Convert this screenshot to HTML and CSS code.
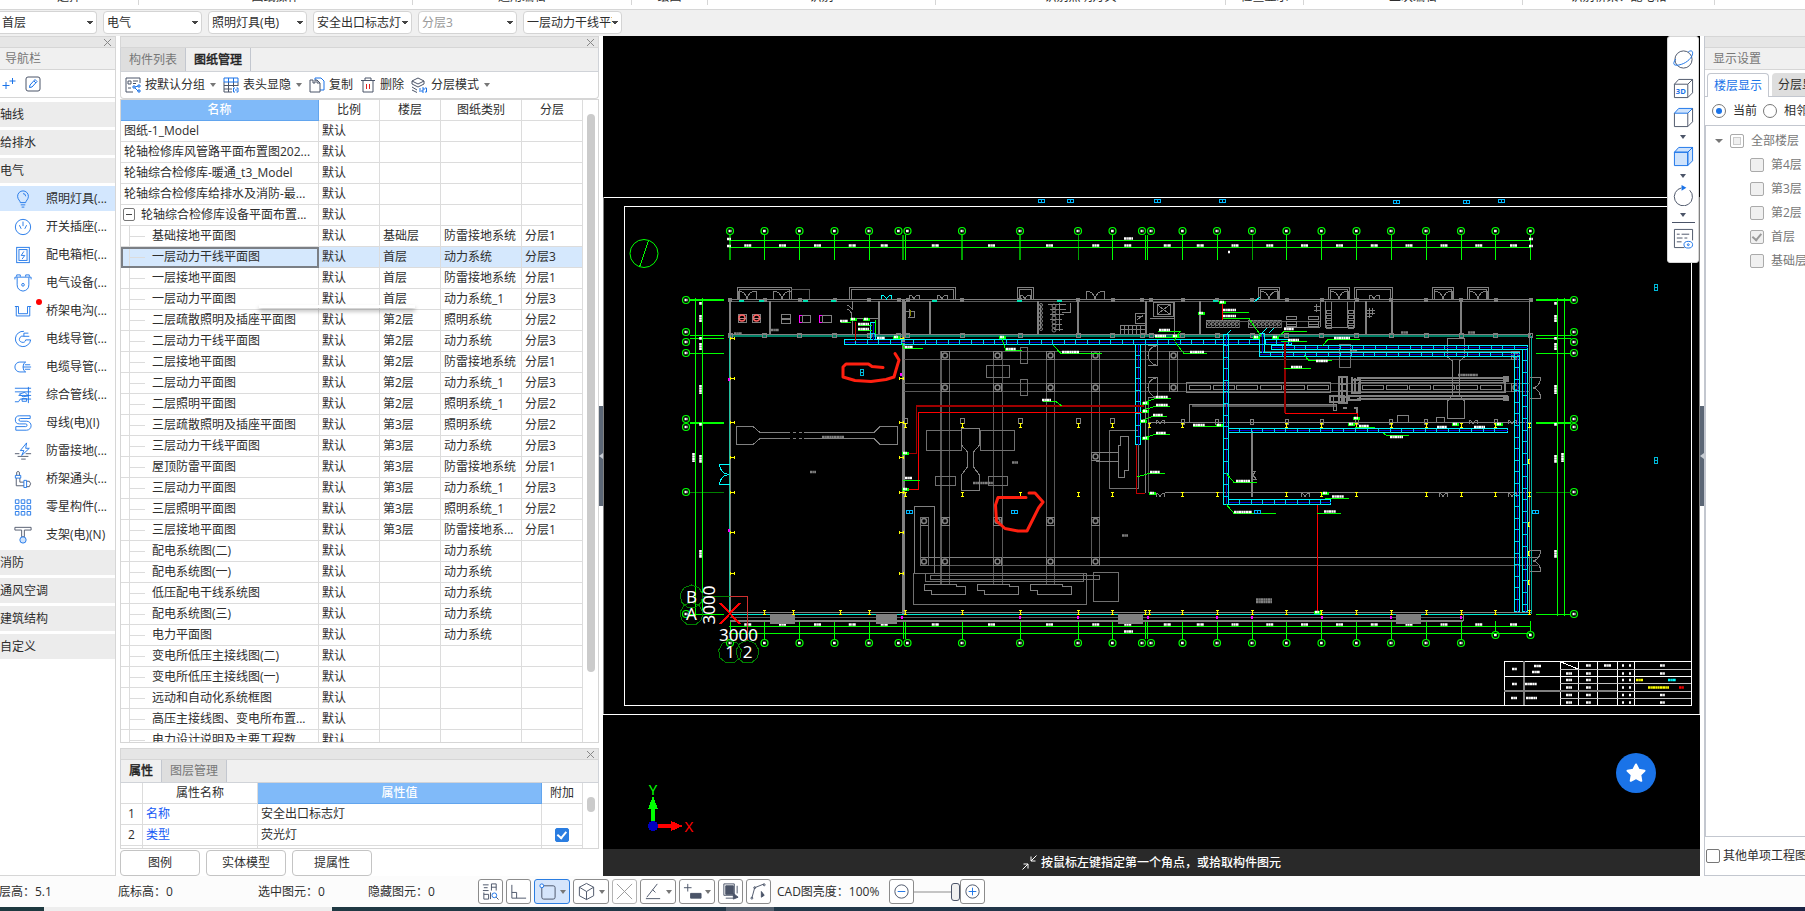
FILE: index.html
```
<!DOCTYPE html>
<html lang="zh-CN">
<head>
  <meta charset="UTF-8" />
  <meta name="viewport" content="width=device-width, initial-scale=1.0" />
  <title>图纸管理</title>
  <link rel="stylesheet" href="styles.css">
</head>
<body>
  <header class="ribbon">
    <span class="w1">选择</span><span class="w2">图纸操作</span><span class="w3">通用编辑</span><span class="w4">绘图</span><span class="w5">识别</span><span class="w6">识别照明灯具</span><span class="w7">检查显示</span><span class="w8">二次编辑</span><span class="w9">识别桥架、配电箱</span>
  </header>

  <div class="combos">
    <select aria-label="楼层"><option>首层</option></select>
    <select aria-label="专业"><option>电气</option></select>
    <select aria-label="构件类型"><option>照明灯具(电)</option></select>
    <select aria-label="构件"><option>安全出口标志灯</option></select>
    <select aria-label="分层" class="muted"><option>分层3</option></select>
    <select aria-label="图纸"><option>一层动力干线平面图</option></select>
  </div>

  <main>
    <nav class="nav">
      <div class="strip"><button class="close" aria-label="关闭"></button></div>
      <div class="panel-title">导航栏</div>
      <div class="nav-tools">
        <button aria-label="新增"><svg width="16" height="16" viewBox="0 0 16 16" class="blue"><path d="M5 6v7M1.500 9.500h7M11.500 2v6M8.500 5h6"/></svg></button>
        <button aria-label="编辑"><svg width="16" height="16" viewBox="0 0 16 16" class="dark"><rect x="1" y="1" width="14" height="14" rx="2"/><path class="b" d="M4.500 11.500l.5-2.500 5-5.500 2 2-5 5.500zM9 5l2 2"/></svg></button>
      </div>
      <a class="group" href="#">轴线</a>
      <a class="group" href="#">给排水</a>
      <a class="group" href="#">电气</a>
      <a class="item active" href="#"><svg viewBox="0 0 20 20"><path d="M7 14c0-2-3-3.500-3-7a6 6 0 0 1 12 0c0 3.500-3 5-3 7zM7.500 16.500h5M8.500 19h3M10 4a3 3 0 0 1 3 3"/></svg>照明灯具(...</a>
      <a class="item" href="#"><svg viewBox="0 0 20 20"><circle cx="10" cy="10" r="8.500"/><path d="M10 4v5M6 8l2 4M14 8l-2 4"/></svg>开关插座(...</a>
      <a class="item" href="#"><svg viewBox="0 0 20 20"><rect x="3" y="1.500" width="14" height="17"/><rect x="5.500" y="4" width="9" height="12"/><path d="M11 6l-3 4.500h4L9 14.500"/></svg>配电箱柜(...</a>
      <a class="item" href="#"><svg viewBox="0 0 20 20"><path d="M1 6V3.500h18V6M3 3V1h4v2M13 3V1h4v2M3.500 4v8q0 6 6.500 7 6.500-1 6.500-7V4"/><circle cx="10" cy="12" r="1.500"/></svg>电气设备(...</a>
      <a class="item dot" href="#"><svg viewBox="0 0 20 20"><path d="M1 5h4v8h10V5h4M2.500 5v10.500h15V5"/></svg>桥架电沟(...</a>
      <a class="item" href="#"><svg viewBox="0 0 20 20"><path d="M11 1.500A8.500 8.500 0 1 0 18.500 11H13a3.500 3.500 0 1 1-2-4V3.500h5M11 7h6"/></svg>电线导管(...</a>
      <a class="item" href="#"><svg viewBox="0 0 20 20"><path d="M13 4.500H6.500a5.500 5.500 0 0 0 0 11H13M13 4.500q-3 1-3 5.500t3 5.500M12 7.500h6M10 10h9M12 12.500h6"/></svg>电缆导管(...</a>
      <a class="item" href="#"><svg viewBox="0 0 20 20"><path d="M1 2.500h18M1 6.500h18M5 10.500h14M1 17.500h4l2-3h12M16 1v18M6 9l6-2 4 4-6 1zM9 14h5v3H9z"/></svg>综合管线(...</a>
      <a class="item" href="#"><svg viewBox="0 0 20 20"><path d="M18 2H6a4.500 4.500 0 0 0 0 9h7a1.500 1.500 0 0 1 0 3H2v4h12a4.500 4.500 0 0 0 0-10H7a1.500 1.500 0 0 1 0-3h11z"/></svg>母线(电)(I)</a>
      <a class="item" href="#"><svg viewBox="0 0 20 20"><path d="M14 1L7 9.500h4L8.500 15 17 7h-4z"/><path class="g" d="M1 13h5M13 13h6M4 16h12M8 19h5"/></svg>防雷接地(...</a>
      <a class="item" href="#"><svg viewBox="0 0 20 20"><path class="g" d="M3 6V2.500q1.500-2 3 0V6M2.500 9v8.500H11M6.500 9v4.500H11M14 12.500h3q3 2.500 0 6h-3"/><path d="M1.500 6h6v3h-6zM11 11.500h3v8h-3z"/></svg>桥架通头(...</a>
      <a class="item" href="#"><svg viewBox="0 0 20 20"><path d="M1.500 2h4v4h-4zM8 2h4v4H8zM14.500 2h4v4h-4zM1.500 8.500h4v4h-4zM8 8.500h4v4H8zM14.500 8.500h4v4h-4zM1.500 15h4v4h-4zM8 15h4v4H8zM14.500 15h4v4h-4z"/></svg>零星构件(...</a>
      <a class="item" href="#"><svg viewBox="0 0 20 20"><path class="g" d="M1 1.500h18v3h-7.500V12h-3V4.500H1z"/><circle cx="10" cy="15.500" r="3.500" fill="#cfe3fc"/></svg>支架(电)(N)</a>
      <a class="group" href="#">消防</a>
      <a class="group" href="#">通风空调</a>
      <a class="group" href="#">建筑结构</a>
      <a class="group" href="#">自定义</a>
    </nav>

    <div class="middle">
      <section class="drawings">
        <div class="strip"><button class="close" aria-label="关闭"></button></div>
        <div class="tabs"><button>构件列表</button><button class="on">图纸管理</button></div>
        <div class="tools">
          <button class="drop"><svg viewBox="0 0 16 16"><path class="g" d="M8 15H1V1h14v5M3 4h3v3H3zM8 4h5M8 6.500h3M3 11h3"/><path d="M8 9h2v2H8zM13 8h2v2h-2zM13 13h2v2h-2zM10 10l3-1M10 11l3 3"/></svg>按默认分组</button>
          <button class="drop"><svg viewBox="0 0 16 16"><path class="g" d="M9 15H1V5M1 8.500h14M1 12h8M5.500 5v10M10.500 5v5M15 5v4"/><path d="M1 1h14v4H1zM5.500 1v4M10.500 1v4M12 11h-1.500v4H12M13.500 11H15v4h-1.500M12 13h2"/></svg>表头显隐</button>
          <button><svg viewBox="0 0 16 16"><path d="M6 3V1h6l3 3v9h-4"/><path class="g" d="M4 3H1v12h10v-9l-3-3H6v3H4zM8 3v3h3"/></svg>复制</button>
          <button><svg viewBox="0 0 16 16"><path class="g" d="M1 3.500h14M5 3V1h6v2M3 4v11h10V4"/><path d="M6.500 7v5M9.500 7v5" class="red"/></svg>删除</button>
          <button class="drop"><svg viewBox="0 0 16 16"><path class="g" d="M7 1l6 3-6 3-6-3zM1 7l6 3 6-3M1 10l5 3M1 13l5 2.500M1 4v3M13 4v3"/><path d="M9 11v4M11 11h2v2h-2v2h2M14 11h1.500v4H14"/></svg>分层模式</button>
        </div>
        <div class="sheet">
          <div class="tablebox">
            <table class="list">
              <thead><tr><th class="hl c1">名称</th><th class="c2">比例</th><th class="c2">楼层</th><th class="c3">图纸类别</th><th class="c4">分层</th></tr></thead>
              <tbody id="rows"></tbody>
            </table>
          </div>
          <div class="scroll"><i></i></div>
          <div class="popup-edge"></div>
        </div>
      </section>

      <section class="props">
        <div class="strip"><button class="close" aria-label="关闭"></button></div>
        <div class="tabs"><button class="on">属性</button><button>图层管理</button></div>
        <div class="sheet">
          <div class="tablebox">
            <table class="list prop">
              <thead><tr><th class="p0"></th><th class="p1">属性名称</th><th class="hl">属性值</th><th class="p3">附加</th></tr></thead>
              <tbody>
                <tr><td class="num">1</td><td class="key">名称</td><td>安全出口标志灯</td><td></td></tr>
                <tr><td class="num">2</td><td class="key">类型</td><td>荧光灯</td><td class="tick"><input type="checkbox" aria-label="附加" checked></td></tr>
                <tr><td></td><td></td><td></td><td></td></tr>
              </tbody>
            </table>
          </div>
          <div class="scroll small"><i></i></div>
        </div>
      </section>
      <div class="actions"><button>图例</button><button>实体模型</button><button>提属性</button></div>
    </div>

    <div class="splitter"><button aria-label="收起左侧"></button></div>

    <div class="canvas">
      <svg id="cad" viewBox="603 36 1097 813" role="img" aria-label="一层动力干线平面图"></svg>
      <div class="prompt">
        <svg width="15" height="15" viewBox="0 0 15 15"><path d="M14.500.500L9 6M9 1.500V6h4.500M.500 14.500L6 9M1.500 9H6v4.500"/></svg>
        按鼠标左键指定第一个角点，或拾取构件图元
      </div>
      <div class="palette">
        <button aria-label="动态观察"><svg viewBox="0 0 22 22"><circle cx="11" cy="11" r="9"/><path class="b" d="M16 3c3-2 5-1 4.500 2C20 9 15 14 9 16c-6 2-9 1-8-2 .5-1.500 1-2.500 2-3.500"/></svg></button>
        <button aria-label="三维"><svg viewBox="0 0 22 22"><path d="M1.500 6.500h14v14h-14zM1.500 6.500L6 1.500h14.500l-5 5M20.500 1.500v14l-5 5"/><text x="3" y="17">3D</text></svg></button>
        <button aria-label="俯视" class="more"><svg viewBox="0 0 22 22"><path class="b" d="M1.500 6.500L6 1.500h14.500l-5 5z" fill="#cfe3fc"/><path d="M1.500 6.500v14h14v-14M20.500 1.500v14l-5 5"/></svg></button>
        <button aria-label="实体" class="more"><svg viewBox="0 0 22 22"><path class="b" fill="#cfe3fc" d="M1.500 6.500h14v14h-14zM1.500 6.500L6 1.500h14.500l-5 5zM20.500 1.500v14l-5 5v-14z"/></svg></button>
        <button aria-label="旋转" class="more"><svg viewBox="0 0 22 22"><path d="M17.500 5.500A9.500 9.500 0 1 1 9 3"/><path d="M9 0l5 3-5 3z" fill="#1a73e8" stroke="none"/></svg></button>
        <hr>
        <button aria-label="显示列表"><svg viewBox="0 0 22 22"><path d="M12 20.500H1.500v-19h19V13M4 6.500h3M9 6.500h8M4 10.500h6M12 10.500h3M4 14.500h5"/><ellipse class="b" cx="16" cy="17.500" rx="4.500" ry="3.500"/><circle class="b" cx="16" cy="17.500" r="1"/></svg></button>
      </div>
      <button class="fab" aria-label="收藏"><svg width="22" height="22" viewBox="0 0 22 22"><path d="M11 2.500l2.700 5.300 5.800.9-4.200 4.200 1 5.900L11 16l-5.300 2.800 1-5.900L2.500 8.700l5.800-.9z"/></svg></button>
    </div>

    <div class="splitter right"><button aria-label="收起右侧"></button></div>

    <aside class="display">
      <div class="strip"></div>
      <div class="panel-title">显示设置</div>
      <div class="dtabs"><button class="on">楼层显示</button><button>分层显示</button></div>
      <div class="radios">
        <label><input type="radio" name="scope" checked>当前</label>
        <label><input type="radio" name="scope">相邻</label>
      </div>
      <div class="tree">
        <label class="root"><input type="checkbox" class="part">全部楼层</label>
        <label><input type="checkbox">第4层</label>
        <label><input type="checkbox">第3层</label>
        <label><input type="checkbox">第2层</label>
        <label><input type="checkbox" checked>首层</label>
        <label><input type="checkbox">基础层</label>
      </div>
      <label class="other"><input type="checkbox">其他单项工程图元</label>
    </aside>
  </main>

  <footer class="status">
    <span class="s1">层高：5.1</span><span class="s2">底标高：0</span><span class="s3">选中图元：0</span><span class="s4">隐藏图元：0</span>
    <div class="modes">
      <button aria-label="图元查找"><svg viewBox="0 0 20 20"><path d="M2 3h6M3 6h4M2 9h6M11 9V2h5v7M11 5.500h5M3 11v7h5v-5H3M10 11v7"/><circle class="b" cx="14" cy="14" r="2.500"/><path d="M16 16l2.500 2.500"/></svg></button>
      <button aria-label="正交"><svg viewBox="0 0 20 20"><path d="M3 3v14h15M3 11h5v6"/></svg></button>
      <button class="drop on" aria-label="框选"><svg viewBox="0 0 20 20"><rect x="4" y="4" width="14" height="14" rx="2"/><circle class="b" cx="4" cy="4" r="2" fill="#fff"/></svg></button>
      <button class="drop" aria-label="视图"><svg viewBox="0 0 20 20"><path d="M10 1.500l7.500 4v9l-7.500 4-7.500-4v-9zM2.500 5.500L10 10l7.500-4.500M10 10v8.500"/></svg></button>
      <button class="pale" aria-label="交点"><svg viewBox="0 0 20 20"><path d="M2 2l16 16M18 2L2 18"/></svg></button>
      <button class="drop" aria-label="角度"><svg viewBox="0 0 20 20"><path d="M14 2L3 16M2 17.500h15M9 8l3 3"/></svg></button>
      <button class="drop" aria-label="偏移"><svg viewBox="0 0 20 20"><path d="M1 6h8M5 2v8"/><path d="M8 12h11v5H8z" fill="#4b5468"/></svg></button>
      <button aria-label="图层"><svg viewBox="0 0 20 20"><path d="M3 2h11v12H3zM17 4v8M5 17h8"/><path d="M5 4h8v9H5zM13 12v6l5-2z" fill="#4b5468"/></svg></button>
      <button aria-label="拾取"><svg viewBox="0 0 20 20"><path d="M3 17L6 6l10-4"/><circle cx="3" cy="17" r="1"/><circle cx="6" cy="6" r="1"/><circle cx="16" cy="3" r="1"/><path d="M13 10v6l3-2z" fill="#4b5468"/></svg></button>
      <label for="bright">CAD图亮度：100%</label>
      <button aria-label="减小"><svg viewBox="0 0 20 20"><circle cx="10" cy="10" r="7"/><path class="b" d="M6 10h8"/></svg></button>
      <input type="range" id="bright" min="0" max="100" value="100">
      <button aria-label="增大"><svg viewBox="0 0 20 20"><circle cx="10" cy="10" r="7"/><path class="b" d="M6 10h8M10 6v8"/></svg></button>
    </div>
  </footer>
  <div class="taskbar"></div>

  <script src="script.js"></script>
</body>
</html>
```
FILE: styles.css
```
* {
  box-sizing: border-box;
}

html {
  height: 100%;
  overflow: hidden;
}

body {
  margin: 0;
  height: 100%;
  display: flex;
  flex-direction: column;
  overflow: hidden;
  background: #fff;
  color: #2e2e2e;
  font: 12px/18px "Open Sans", "Noto Sans CJK SC", sans-serif;
  white-space: nowrap;
}

button, select, input {
  font: inherit;
  color: inherit;
  margin: 0;
}

button {
  border: 0;
  padding: 0;
  background: none;
}

svg {
  fill: none;
  stroke: #1a73e8;
  flex: none;
}

svg .g, svg.dark { stroke: #4b5468; }
svg .b { stroke: #1a73e8; }
svg .red { stroke: #e02020; }

/* ribbon bottoms */
.ribbon {
  display: flex;
  height: 10px;
  flex: none;
  overflow: hidden;
  border-bottom: 1px solid #d6d6d6;
}

.ribbon span {
  height: 5px;
  line-height: 12px;
  border-right: 1px solid #d6d6d6;
  display: flex;
  align-items: flex-end;
  justify-content: center;
  padding-bottom: 2px;
  flex: none;
}

.w1 { width: 139px; }
.w2 { width: 274px; }
.w3 { width: 219px; }
.w4 { width: 76px; }
.w5 { width: 228px; }
.w6 { width: 290px; }
.w7 { width: 78px; }
.w8 { width: 219px; }
.w9 { width: 192px; }

.combos {
  display: flex;
  gap: 6px;
  height: 26px;
  flex: none;
  padding: 1px 0 2px;
  background: #f0f0f0;
}

.combos select {
  appearance: none;
  width: 99px;
  height: 23px;
  border: 1px solid #d4d4d4;
  border-radius: 4px;
  padding: 0 9px 0 3px;
  background-color: #fff;
  background-image: linear-gradient(to bottom right, #444 50%, transparent 51%), linear-gradient(to bottom left, #444 50%, transparent 51%);
  background-repeat: no-repeat;
  background-size: 3px 4px;
  background-position: right 3px center, right 6px center;
}

.combos select:first-child {
  width: 97px;
  border-left: 0;
  border-radius: 0 4px 4px 0;
  padding-left: 2px;
}

.combos .muted { color: #999; }

main {
  flex: 1;
  min-height: 0;
  display: flex;
}

.strip {
  height: 12px;
  flex: none;
  background: #e6e6e6;
  border: 1px solid #d6d6d6;
  display: flex;
  justify-content: flex-end;
  align-items: center;
  padding-right: 4px;
}

.close {
  width: 7px;
  height: 7px;
  background: linear-gradient(45deg, transparent 45%, #888 45% 55%, transparent 55%), linear-gradient(-45deg, transparent 45%, #888 45% 55%, transparent 55%);
}

.panel-title {
  height: 22px;
  flex: none;
  line-height: 22px;
  background: #f0f0f0;
  border-bottom: 1px solid #d6d6d6;
  color: #777;
  padding-left: 5px;
}

/* left navigation */
.nav {
  width: 116px;
  flex: none;
  display: flex;
  flex-direction: column;
  gap: 3px;
  border-right: 1px solid #d6d6d6;
  border-bottom: 1px solid #d6d6d6;
  overflow: hidden;
}

.nav .strip, .nav .panel-title { margin-bottom: -3px; }
.nav .strip { border-left: 0; border-right: 0; }

.nav-tools {
  height: 28px;
  flex: none;
  display: flex;
  gap: 8px;
  align-items: center;
  padding-left: 1px;
  border-bottom: 1px solid #d6d6d6;
}

.nav-tools button { height: 16px; }
.nav-tools + .group { margin-top: 1px; }

.group {
  height: 25px;
  flex: none;
  line-height: 25px;
  background: #ececec;
  color: inherit;
  text-decoration: none;
}

.item {
  height: 25px;
  flex: none;
  display: flex;
  align-items: center;
  gap: 14px;
  padding-left: 14px;
  color: inherit;
  text-decoration: none;
  position: relative;
}

.item svg { width: 18px; height: 18px; }
.item.active { background: #d3e7fe; }

.item.dot::after {
  content: "";
  position: absolute;
  left: 36px;
  top: 1px;
  width: 6px;
  height: 6px;
  border-radius: 50%;
  background: #f00;
}

/* middle column */
.middle {
  width: 479px;
  flex: none;
  margin-left: 4px;
  display: flex;
  flex-direction: column;
}

.drawings {
  flex: 1;
  min-height: 0;
  display: flex;
  flex-direction: column;
}

.props {
  margin-top: 5px;
  height: 101px;
  flex: none;
  display: flex;
  flex-direction: column;
}

.tabs {
  display: flex;
  height: 23px;
  flex: none;
  background: #f0f0f0;
  border: 1px solid #d0d3d8;
  border-top: 0;
}

.drawings .tabs { height: 24px; }

.tabs button {
  padding: 0 8px;
  background: #dedede;
  color: #777;
  border-right: 1px solid #c3c7cf;
}

.tabs .on {
  background: #f0f0f0;
  color: #222;
  font-weight: 500;
  -webkit-text-stroke: 0.3px #222;
}

.tools {
  display: flex;
  align-items: center;
  height: 27px;
  flex: none;
  padding-left: 4px;
  gap: 7px;
  border: 1px solid #d6d6d6;
  border-top: 0;
  border-radius: 0 0 4px 4px;
}

.tools button {
  display: flex;
  align-items: center;
  gap: 4px;
}

.tools svg { width: 16px; height: 16px; }

.drop::after {
  content: "";
  border: 3px solid transparent;
  border-top: 4px solid #777;
  border-bottom: 0;
  margin-left: 1px;
}

.sheet {
  flex: 1;
  min-height: 0;
  display: flex;
  position: relative;
  border: 1px solid #d6d6d6;
}

.props .sheet { border-top: 0; }

.tablebox {
  flex: 1;
  overflow: hidden;
}

.list {
  table-layout: fixed;
  width: 100%;
  border-collapse: separate;
  border-spacing: 0;
}

.list th, .list td {
  height: 21px;
  line-height: 18px;
  border-right: 1px solid #dcdcdc;
  border-bottom: 1px solid #dcdcdc;
  padding: 0 3px;
  text-align: left;
  font-weight: 400;
  overflow: hidden;
  text-overflow: ellipsis;
}

.list th { text-align: center; }

.list th.hl {
  background: #80baf9;
  color: #fff;
  font-weight: 500;
  border-color: #62a5ee;
}

.c1 { width: 198px; }
.c2 { width: 61px; }
.c3 { width: 81px; }
.p0 { width: 22px; }
.p1 { width: 115px; }
.p3 { width: 41px; }

.list td.child {
  padding-left: 31px;
  background: linear-gradient(#dcdcdc, #dcdcdc) no-repeat 8px 0 / 1px 100%, linear-gradient(#dcdcdc, #dcdcdc) no-repeat 8px 10px / 16px 1px;
}

.list tr.sel td { background-color: #d5e8fd; }
.list tr.sel td:first-child { outline: 2px solid #7b7f85; outline-offset: -2px; }

.fold {
  display: inline-block;
  width: 12px;
  height: 13px;
  border: 1px solid #777;
  border-radius: 2px;
  margin: 0 6px 0 -1px;
  vertical-align: -2px;
  background: linear-gradient(#444, #444) no-repeat center / 6px 1px;
}

.list .num { text-align: center; }
.list .key { color: #1559f5; }
.list .tick { text-align: center; line-height: 0; text-overflow: clip; }

.scroll {
  width: 15px;
  flex: none;
  padding: 14px 3px 0 4px;
}

.scroll i {
  display: block;
  height: 558px;
  border-radius: 4px;
  background: #cbcbcb;
}

.scroll.small i { height: 15px; }

/* lower edge of a floating panel over the list */
.popup-edge {
  position: absolute;
  left: 138px;
  top: 205px;
  width: 156px;
  height: 3px;
  background: #fff;
  box-shadow: 0 3px 4px rgba(0, 0, 0, 0.35);
}

.actions {
  display: flex;
  gap: 6px;
  height: 27px;
  flex: none;
  padding-top: 1px;
}

.actions button {
  width: 80px;
  border: 1px solid #c4c4c4;
  border-radius: 4px;
  background: #fff;
}

.splitter {
  width: 4px;
  flex: none;
  display: flex;
  align-items: center;
}

.splitter button {
  width: 4px;
  height: 100px;
  background: #5c6776;
}

.splitter button::after {
  content: "";
  display: block;
  border: 3px solid transparent;
  border-right: 4px solid #c8cdd4;
  border-left: 0;
}

/* drawing area */
.canvas {
  flex: 1;
  min-width: 0;
  display: flex;
  flex-direction: column;
  position: relative;
  background: #000;
}

#cad {
  flex: 1;
  min-height: 0;
  width: 100%;
  font-family: "Noto Sans", sans-serif;
}

.prompt {
  height: 27px;
  flex: none;
  display: flex;
  align-items: center;
  justify-content: center;
  gap: 4px;
  background: #292929;
  color: #fff;
  font-weight: 500;
}

.prompt svg { stroke: #fff; }

.palette {
  position: absolute;
  right: 1px;
  top: 0;
  width: 32px;
  height: 227px;
  display: flex;
  flex-direction: column;
  align-items: center;
  padding-top: 8px;
  background: #fff;
  border: 1px solid #d6d6d6;
  border-radius: 3px;
}

.palette button { height: 29px; }
.palette .more { height: 39px; }

.palette svg {
  display: block;
  width: 21px;
  height: 21px;
  stroke: #4b5468;
}

.palette text {
  font: bold 8px "Open Sans", sans-serif;
  fill: #1a73e8;
  stroke: none;
}

.palette .more::after {
  content: "";
  display: block;
  margin: 7px auto 0;
  width: 0;
  border: 3px solid transparent;
  border-top: 4px solid #4b5468;
  border-bottom: 0;
}

.palette hr {
  width: 23px;
  margin: 2px 0 1px;
  border: 0;
  border-top: 1px solid #4b5468;
}

.fab {
  position: absolute;
  right: 44px;
  bottom: 83px;
  width: 40px;
  height: 40px;
  border-radius: 50%;
  background: #1a73e8;
  display: grid;
  place-items: center;
}

.fab svg {
  fill: #fff;
  stroke: #fff;
  stroke-width: 2;
  stroke-linejoin: round;
}

/* right panel */
.display {
  width: 101px;
  flex: none;
  display: flex;
  flex-direction: column;
  overflow: hidden;
  border-left: 1px solid #c3c7cf;
}

.display .strip { border-right: 0; border-left: 0; }
.display .panel-title { padding-left: 8px; }

.dtabs {
  display: flex;
  gap: 3px;
  flex: none;
  height: 27px;
  padding: 3px 0 0 2px;
  border-bottom: 1px solid #c3c7cf;
}

.dtabs button {
  flex: none;
  padding: 0 6px;
  background: #dedede;
  border-radius: 4px 4px 0 0;
}

.dtabs .on {
  background: #fff;
  color: #1a73e8;
  border: 1px solid #c3c7cf;
  border-bottom: 0;
  margin-bottom: -1px;
}

.radios {
  display: flex;
  gap: 6px;
  height: 29px;
  flex: none;
  align-items: center;
  padding-left: 7px;
  border-bottom: 1px solid #c3c7cf;
}

.radios label, .tree label, .other {
  display: flex;
  align-items: center;
  gap: 7px;
  flex: none;
}

input[type="radio"], input[type="checkbox"] {
  appearance: none;
  width: 14px;
  height: 14px;
  flex: none;
  border: 1px solid #777;
  border-radius: 2px;
  background: #fff;
  display: inline-grid;
  place-items: center;
}

input[type="radio"] { border-radius: 50%; }

input[type="radio"]:checked::after {
  content: "";
  width: 6px;
  height: 6px;
  border-radius: 50%;
  background: #1a73e8;
}

input[type="checkbox"]:checked::after {
  content: "";
  width: 4px;
  height: 7px;
  border: solid #999;
  border-width: 0 2px 2px 0;
  transform: rotate(40deg) translate(-1px, -1px);
}

.tick input[type="checkbox"] { background: #2a7de1; border-color: #2a7de1; }
.tick input[type="checkbox"]:checked::after { border-color: #fff; }

.tree {
  flex: 1;
  padding-top: 3px;
  color: #777;
  border-left: 1px solid #c3c7cf;
  border-bottom: 1px solid #c3c7cf;
}

.tree label { height: 24px; padding-left: 44px; }
.tree label.root { padding-left: 9px; }

.tree .root::before {
  content: "";
  border: 4px solid transparent;
  border-top: 4px solid #777;
  border-bottom: 0;
}

.tree input { background: #f0f0f0; border-color: #aaa; }
.tree .part { box-shadow: inset 0 0 0 2px #fff, inset 0 0 0 3px #ccc; }

.other {
  height: 39px;
  gap: 3px;
  padding-left: 1px;
  border-bottom: 1px solid #c3c7cf;
}

/* status bar */
.status {
  height: 31px;
  flex: none;
  display: flex;
  align-items: center;
  background: #fcfcfc;
}

.s1 { width: 119px; margin-left: -1px; }
.s2 { width: 140px; }
.s3 { width: 110px; }
.s4 { width: 110px; }

.modes {
  display: flex;
  gap: 3px;
  align-items: center;
}

.modes button {
  width: 25px;
  height: 25px;
  border: 1px solid #8c8c8c;
  border-radius: 3px;
  background: #fff;
  display: flex;
  align-items: center;
  justify-content: center;
}

.modes svg { width: 19px; height: 19px; stroke: #4b5468; }
.modes .drop { width: 36px; }
.modes .drop::after { margin-left: 3px; }
.modes .on { background: #d5e5fb; border-color: #2a7de1; }
.modes .pale svg { stroke: #999; }
.modes .pale { border-color: #b4b4b4; }
.modes label { padding: 0 7px 0 3px; }

.modes input {
  appearance: none;
  width: 46px;
  height: 20px;
  margin: 0 -3px;
  background: linear-gradient(#c4c4c4, #c4c4c4) no-repeat center / 100% 2px;
}

.modes input::-webkit-slider-thumb {
  appearance: none;
  width: 9px;
  height: 18px;
  border: 1px solid #4b5468;
  border-radius: 3px;
  background: #f0f0f0;
}

.taskbar {
  height: 4px;
  flex: none;
  background: linear-gradient(#eee, #eee) no-repeat 44px 0 / 288px 4px, linear-gradient(#53606e, #53606e) no-repeat 726px 0 / 48px 4px, linear-gradient(to right, #1e3a40, #22384a 50%, #1a2444);
}
```
FILE: script.js
```
// ---- drawing list ----
const sheets = [
  ['图纸-1_Model'],
  ['轮轴检修库风管路平面布置图202...'],
  ['轮轴综合检修库-暖通_t3_Model'],
  ['轮轴综合检修库给排水及消防-最...'],
  ['轮轴综合检修库设备平面布置...', 'fold'],
  ['基础接地平面图', '基础层', '防雷接地系统', '分层1'],
  ['一层动力干线平面图', '首层', '动力系统', '分层3'],
  ['一层接地平面图', '首层', '防雷接地系统', '分层1'],
  ['一层动力平面图', '首层', '动力系统_1', '分层3'],
  ['二层疏散照明及插座平面图', '第2层', '照明系统', '分层2'],
  ['二层动力干线平面图', '第2层', '动力系统', '分层3'],
  ['二层接地平面图', '第2层', '防雷接地系统', '分层1'],
  ['二层动力平面图', '第2层', '动力系统_1', '分层3'],
  ['二层照明平面图', '第2层', '照明系统_1', '分层2'],
  ['三层疏散照明及插座平面图', '第3层', '照明系统', '分层2'],
  ['三层动力干线平面图', '第3层', '动力系统', '分层3'],
  ['屋顶防雷平面图', '第3层', '防雷接地系统', '分层1'],
  ['三层动力平面图', '第3层', '动力系统_1', '分层3'],
  ['三层照明平面图', '第3层', '照明系统_1', '分层2'],
  ['三层接地平面图', '第3层', '防雷接地系...', '分层1'],
  ['配电系统图(二)', '', '动力系统', ''],
  ['配电系统图(一)', '', '动力系统', ''],
  ['低压配电干线系统图', '', '动力系统', ''],
  ['配电系统图(三)', '', '动力系统', ''],
  ['电力平面图', '', '动力系统', ''],
  ['变电所低压主接线图(二)', '', '', ''],
  ['变电所低压主接线图(一)', '', '', ''],
  ['远动和自动化系统框图', '', '', ''],
  ['高压主接线图、变电所布置...', '', '', ''],
  ['电力设计说明及主要工程数...', '', '', '']
];

document.getElementById('rows').innerHTML = sheets.map((s, i) => {
  const fold = s[1] === 'fold';
  const child = s.length === 4;
  const cells = child ? s.slice(1) : ['', '', ''];
  return `<tr${i === 6 ? ' class="sel"' : ''}><td${child ? ' class="child"' : ''}>${fold ? '<i class="fold"></i>' : ''}${s[0]}</td><td>默认</td>` +
    cells.map(c => `<td>${c}</td>`).join('') + '</tr>';
}).join('');

// ---- floor plan ----
const out = [];
const G = '#808080', D = '#5a5a5a', GREEN = '#00ff00', CY = '#00ffff', W = '#fff', Y = '#ffff00', T = '#008066';

const path = (d, c = G, w = 1) => out.push(`<path d="${d}" stroke="${c}" stroke-width="${w}"/>`);
const line = (x1, y1, x2, y2, c, w) => path(`M${x1} ${y1}L${x2} ${y2}`, c, w);
const rect = (x1, y1, x2, y2, c, w) => path(`M${x1} ${y1}H${x2}V${y2}H${x1}Z`, c, w);
const fill = (x1, y1, x2, y2, c) => out.push(`<path d="M${x1} ${y1}H${x2}V${y2}H${x1}Z" fill="${c}" stroke="none"/>`);
const ring = (x, y, r, c, w = 1) => out.push(`<circle cx="${x}" cy="${y}" r="${r}" stroke="${c}" stroke-width="${w}" shape-rendering="auto"/>`);
// dimension figures are too small to read at this zoom
const mark = (x, y, w, c = W, v = false) =>
  out.push(`<path d="M${x} ${y}${v ? 'v' : 'h'}${w}" stroke="${c}" stroke-width="2.6" stroke-dasharray="2.2 .3 1.4 .3 3 .3" shape-rendering="auto"/>`);
const bubble = (x, y) => { ring(x, y, 3.5, GREEN, 1.2); mark(x - 1.5, y, 3); };
const yellow = (x, y, v = true) => path(v ? `M${x} ${y - 2}v4M${x - 1.5} ${y - 2}h3M${x - 1.5} ${y + 2}h3` : `M${x - 2} ${y}h4M${x - 2} ${y - 1.5}v3M${x + 2} ${y - 1.5}v3`, Y);
const post = (x, y) => { rect(x - 4, y - 4, x + 4, y + 4, G); ring(x, y, 2.5, G, 1.5); };
const door = (x, y, w = 9, h = 8, c = G) => path(`M${x - w} ${y}v${-h}q${w - 2} 0 ${w} ${h}q2 ${-h} ${w} ${-h}v${h}`, c);

// sheet frames
line(603, 197.5, 1700, 197.5, W);
line(603, 714.5, 1700, 714.5, W);
line(603.5, 197, 603.5, 714, G);
line(1699.5, 197, 1699.5, 714, G);
rect(624.5, 206.5, 1691.5, 705.5, W);

// compass
ring(644, 253.5, 14, GREEN);
line(648.5, 241, 639.5, 267, GREEN);

// axis grid
const xs = [730, 764.5, 799.5, 834.5, 869, 898.5, 907.5, 962, 1020, 1078, 1112.5, 1142, 1151, 1182.5, 1217, 1252, 1286.5, 1321.5, 1356.5, 1391, 1426, 1461, 1495.5, 1530.5];
const stem = x => ({ 898.5: 903, 907.5: 905, 1142: 1145, 1151: 1147.5 }[x] || x);
xs.forEach((x, i) => {
  const last = i > 21;
  bubble(x, 231);
  line(stem(x), 235, stem(x), 260, [0, 5, 7, 8, 9, 15].includes(i) ? '#00a000' : GREEN, [0, 5, 7, 8].includes(i) ? 2 : 1);
  bubble(x, last ? 635 : 643);
  line(stem(x), 621, stem(x), last ? 631 : 639, GREEN);
  if (i && x - xs[i - 1] > 20) {
    const m = (x + xs[i - 1]) / 2 - 3;
    mark(m, 245.5, 7);
    mark(m, 624.5, 7);
  }
});
[240.5, 247.5, 626.5, 633.5].forEach(y => line(729, y, 1531, y, GREEN));
mark(1124, 238.5, 9); mark(1124, 631.5, 9); mark(727, 239, 4); mark(727, 246, 4); mark(1529, 239, 4); mark(1529, 246, 4);
mark(1228, 252, 2);
[300, 332, 342, 353, 419, 427, 492, 614].forEach(y => { bubble(686, y); bubble(1574, y); });
[300, 335.5, 338, 353, 422.5, 492, 614].forEach(y => {
  line(690, y, 724, y, y === 492 ? '#008000' : GREEN, y === 300 || y === 422.5 ? 2 : 1);
  line(1536, y, 1571, y, y === 492 ? '#008000' : GREEN, y === 300 || y === 422.5 ? 2 : 1);
});
[695.5, 702.5, 1557.5, 1564.5].forEach(x => line(x, 298, x, 616, GREEN));
[[302, 3], [315, 7], [337, 3], [343, 7], [385, 9], [423, 3], [455, 8], [550, 8]].forEach(([y, h]) => { mark(700.5, y, h, W, true); mark(1555.5, y, h, W, true); });
mark(693.5, 453, 9, W, true); mark(1562.5, 453, 9, W, true);

// outer walls
line(730, 299.5, 1531, 299.5, G); line(730, 301.5, 1531, 301.5, D);
line(730, 334.5, 1531, 334.5, G); line(730, 336, 1531, 336, T, 2);
line(730, 300, 730, 613, G, 2); line(729, 336, 729, 613, '#20c0a0');
line(903.5, 300, 903.5, 615, G, 2.5);
line(1529.5, 300, 1529.5, 614, G, 1.5); line(1531.5, 336, 1531.5, 614, '#00b0a0');
line(730, 612.5, 1531, 612.5, G); line(730, 614.5, 1531, 614.5, '#00e8d0');
line(730, 617.5, 1463, 617.5, D); line(730, 621, 1463, 621, G, 2);
line(1463.5, 614, 1463.5, 621, G);
[[770, 795], [876, 897], [1118, 1143], [1396, 1421]].forEach(([a, b]) => fill(a, 614, b, 624, G));
xs.forEach(x => { fill(x - 2, 298, x + 2, 302, G); rect(x - 2, 333, x + 2, 337, G); });

// canopies and doors
[[737, 791], [849, 955], [1017, 1033], [1258, 1279], [1328, 1349], [1354, 1392], [1432, 1453], [1467, 1488]].forEach(([a, b]) => {
  path(`M${a + .5} 299V287.500H${b + .5}V299M${a + 2.5} 299V289.500H${b - 1.5}V299`);
});
path('M791 289.500H809.500V299', D);
[747, 782, 1095, 1269, 1339, 1443, 1478].forEach(x => door(x, 299));
[914, 942, 1025, 1374].forEach(x => door(x, 299, 5, 4));
door(886.5, 299, 5, 4, CY);
[739, 759, 803, 831, 932, 1017, 1057, 1213].forEach(x => line(x, 300.5, x + 5, 300.5, '#00e0b0', 2));
[[770, 2], [878.5, 2], [905.5, 1], [929.5, 2], [1038, 1.5], [1078, 2], [1146, 2.5], [1200, 2], [1391.5, 2], [1461, 1.5], [1366, 1.5]].forEach(([x, w]) => line(x, 301, x, 334, G, w));
path('M852.500 301V309l-5-4M852.500 334V318H878.500M847 309q5 1 5 9');

// room equipment
[742, 756.5].forEach(x => { rect(x - 4, 314, x + 4, 322, G); ring(x, 318, 3, '#ff6060', 1.5); line(x - 4, 318, x + 4, 318, '#c08080'); });
rect(781.5, 314.5, 790.5, 318, G); rect(781.5, 319.5, 790.5, 323, G);
rect(799.5, 315.5, 802.5, 322, '#ff00ff'); rect(802.5, 315.5, 810.5, 322, G);
rect(819.5, 315.5, 822.5, 322, '#ff00ff'); rect(822.5, 315.5, 831, 322, G);
path('M1040 305v24M1048 304h18M1050 309h16M1050 314h14M1050 319h12M1052 324h10M1054 329h9M1059 303v28M1070 303v9h-8', G);
for (let y = 305; y < 330; y += 4) { ring(1041, y, 1.5, G); ring(1054, y + 1, 2, G); }
path('M1120 325.500h25M1120 329.500h25M' + [1120, 1124, 1128, 1132, 1136, 1140].map(x => x + ' 325v10').join('M'));
rect(1135, 313, 1145, 323, G); path('M1137 320l6-5M1137 316h6');
rect(1153.5, 302.5, 1173.5, 316, G); path('M1157 304.500h13v10h-13zl13 10M1170 304.500l-13 10M1150 318.500h24M1174 302V334');
[[1206, 1239], [1248, 1281]].forEach(([a, b]) => {
  rect(a, 320.5, b, 327.5, G);
  for (let x = a + 3; x < b - 1; x += 4) { ring(x, 324, 1.5, G); line(x + 2, 320, x + 2, 328, D); }
});
line(1206, 321.5, 1320, 321.5, D); line(1284, 327.5, 1320, 327.5);
[[1286, 1296], [1308, 1318]].forEach(([a, b]) => { rect(a, 316.5, b, 319.5, G); rect(a, 321.5, b, 326.5, G); line(a, 324, b, 324, G); });
path('M1325.500 301V327.500H1354V301M1320 301V327M1331.500 302V327M1347.500 302V327M1314 306h6M1314 310h6M1316 304v8');
[310, 315, 320, 325].forEach(y => { rect(1326, y, 1331, y + 3); rect(1348, y, 1353, y + 3); });
path('M1366 310h9M1366 313h9M1366 316h6M1369 308v10M1372 308v7M906 311h8v6h-6M909 309v9');
line(910, 310, 910, 316, '#808000');

// overhead crane, left hall
path('M736.500 426.500H753L760 432.500H874L880 426.500H897.500V444.500H880L874 438.500H760L753 444.500H736.500Z');
path('M790 432.500h14M790 438.500h14', '#000'); path('M793 432.500h3M799 432.500h3M793 438.500h3M799 438.500h3');
mark(822, 437, 22, G); mark(810, 472, 6, G); mark(734, 333.5, 8, G); mark(771, 330, 8, G);

// rails and columns
line(941, 351.5, 1520, 351.5, D); line(904, 359.5, 1520, 359.5, D);
line(904, 383.5, 1530, 383.5, D); line(904, 391.5, 1530, 391.5, D);
line(920, 557.5, 1538, 557.5, G); line(920, 565.5, 1538, 565.5, D);
[[941, 949.5, 585], [993.5, 1002.5, 585], [1046.5, 1054.5, 585], [1091.5, 1099.5, 557], [1169.5, 1177.5, 391]].forEach(([a, b, y], i) => {
  line(a, 351, a, y, D, i ? 1 : 2); line(b, 351, b, y, D);
});
[945, 997.5, 1050.5, 1095.5].forEach(x => [355.5, 387.5, 521, 561.5].forEach(y => post(x, y)));
[[924, 521], [924, 561.5], [1173.5, 355.5], [1173.5, 387.5], [1515.5, 355.5], [1515.5, 387.5], [1095.5, 456.5]].forEach(([x, y]) => post(x, y));
[[986.5, 365.5, 1009.5, 377.5], [1020.5, 347.5, 1027.5, 363.5], [1020.5, 379.5, 1027.5, 395.5],
  [926.5, 430.5, 961.5, 450.5], [980.5, 430.5, 1014.5, 450.5], [935.5, 476.5, 955.5, 485.5], [988.5, 476.5, 1007.5, 485.5],
  [1109.5, 430.5, 1138.5, 488.5], [913.5, 573.5, 1086.5, 604.5], [920.5, 517.5, 928.5, 565.5], [925.5, 573.5, 1083.5, 581.5],
  [930.5, 575.5, 1099.5, 579.5], [1093.5, 572.5, 1118.5, 601.5], [1339.5, 344.5, 1350.5, 367.5]].forEach(r => rect(...r, '#707070'));
path('M914.500 573V506.500H934.500V573');
path('M961.500 428.500H979.500V445L973.500 452V467L979.500 475V490.500H961.500V475L967.500 467V452L961.500 445Z');
path('M1120.500 436.500h8v34h-4v7h-6v-32h2zM1096 452.500h22M1096 461.500h22');
[0, 53, 106].forEach(o => path(`M${924.5 + o} 584.500h32v2h9v8h-34v-4h-7Z`));
mark(973, 483, 20, G); mark(1012, 462.5, 6, G); mark(1122, 535.5, 6, G); mark(1256, 599.5, 16, G); mark(1256, 602, 16, G);

// hall partitions
line(1145.5, 344, 1145.5, 493, G, 1.5); line(1148, 398, 1148, 493, D);
line(1148, 422.5, 1531, 422.5, G, 1.5); line(1165, 492.5, 1530, 492.5, G, 1.5);
line(1252, 430, 1252, 497, G, 1.5); path('M1252 471h4l-3 4 3 4h-4');
[1182.5, 1217, 1252, 1286.5, 1321.5, 1356.5, 1391, 1426, 1495.5].forEach(x => rect(x - 1.5, 419, x + 1.5, 424, G));
[905, 962, 1020, 1078, 1112.5].forEach(x => rect(x - 2, 418.5, x + 2, 423, G));
[[1160, 424], [1473, 424], [1512, 424], [1160, 497], [1305, 497], [1443, 497], [1512, 497]].forEach(([x, y]) => door(x, y, 4, 4));
rect(1397.5, 415.5, 1408.5, 422, G); rect(1436, 417.5, 1444, 422, G);
[355.5, 387.5].forEach(y => path(`M1148 ${y - 10}h9v20h-9M1157 ${y - 10}q-9 2-9 10q1 8 9 10`));
[388, 561].forEach(y => path(`M1530 ${y - 10.5}h10.500q0 8-7 10.500q7 2 7 10.500H1530`));
path('M730 464.500H719.500q1 9 9 10q-8 1-9 10H730', CY);

// production line
rect(1186.5, 382.5, 1330.5, 392.5, G, 1.5); rect(1358.5, 382.5, 1505, 392.5, G, 1.5);
for (let i = 0; i < 6; i++) { rect(1189.5 + i * 23.6, 385.5, 1210.5 + i * 23.6, 389.5, G); rect(1362.5 + i * 23.6, 385.5, 1383.5 + i * 23.6, 389.5, G); }
[378, 380.5, 396, 399].forEach(y => line(1357, y, 1508, y, G, 1.5));
fill(1503, 376, 1509, 382, G); fill(1503, 396, 1509, 401, G);
line(1192, 405.5, 1336, 405.5, D, 3); path('M1189.500 422V404.500H1336V410H1333V396');
path('M1339 377h8v26h-8zM1342 377v26M1339 384h8M1339 391h8M1339 397h8M1352 380h8M1352 377v16h8v-16M1355 378v14M1330 396h14v6h-14zM1349 396h11v4h-11zM1343 408h4M1354 408h3v5', G, 1.5);
path('M1447.500 338.500H1464.500V357L1459.500 361V395L1464.500 401V418.500H1447.500V401L1452.500 395V361L1447.500 357Z');
mark(1458, 375, 20, G); mark(1350, 350.5, 7, G); mark(1401, 332.5, 7, G); mark(1468, 332.5, 7, G);

// yellow steel columns
[338, 378.5, 422, 457, 492, 532, 573].forEach(y => { yellow(732.5, y, false); yellow(901, y, false); });
[764.5, 793.5, 840, 869, 905, 962, 1020, 1078, 1112.5, 1145, 1149, 1182, 1217, 1252, 1286.5, 1321.5, 1356.5, 1391, 1426, 1461, 1495.5, 1529].forEach(x => yellow(x, 612));
[905, 962, 1020, 1078, 1112.5, 1182.5, 1217, 1286.5, 1321.5, 1356.5, 1426, 1461, 1495.5, 1529].forEach(x => yellow(x, 494.5));
[905, 962, 1020, 1078, 1112.5, 1149, 1182.5, 1286.5, 1321.5, 1356.5, 1391, 1426, 1461, 1495.5, 1529].forEach(x => yellow(x, 425.5));
[461, 524, 553, 582].forEach(y => yellow(1528, y));
[[729, 379], [729, 530], [901, 374], [902, 617], [1020, 617], [1078, 617], [1148, 617], [1217, 617], [1252, 617], [1322, 617], [1391, 617], [1461, 617]].forEach(([x, y]) => fill(x - 1, y - 1, x + 1, y + 2, '#ff00ff'));

// cable trays
function tray(x1, y1, x2, y2) {
  rect(x1, y1, x2, y2, '#00f0ff');
  const across = x2 - x1 > y2 - y1;
  if (across) line(x1, (y1 + y2) / 2, x2, (y1 + y2) / 2, '#0000c8');
  else line((x1 + x2) / 2, y1, (x1 + x2) / 2, y2, '#0000c8');
  for (let p = (across ? x1 : y1) + 11; p < (across ? x2 : y2) - 3; p += 11.6) {
    if (across) line(p, y1, p, y2, '#00d0e0'); else line(x1, p, x2, p, '#00d0e0');
  }
}
tray(844.5, 339.5, 1259.5, 344.5);
tray(870.5, 322.5, 875.5, 339.5);
tray(1135.5, 344.5, 1140.5, 444.5);
tray(1271.5, 345.5, 1527.5, 349.5);
tray(1259.5, 352.5, 1519.5, 356.5);
tray(1259.5, 333.5, 1264.5, 352.5);
tray(1265.5, 339.5, 1291.5, 344.5);
tray(1514.5, 356.5, 1519.5, 611.5);
tray(1522.5, 349.5, 1527.5, 611.5);
tray(1223.5, 334.5, 1228.5, 504.5);
tray(1228.5, 428.5, 1507.5, 432.5);
tray(1228.5, 499.5, 1330.5, 504.5);
path('M1227 334l4-4M1262 333l5-5M1269 333l5-5M1254 302l6-5M1520 614h8', CY);

// circuits
path('M1143.500 406H916.500V453.500H907', '#a00000', 1.5);
path('M1143.500 412.500H918.500V489.500H907', '#f00');
path('M1136.500 445V493.500H1144.500M855.500 322V341', '#c00000');
line(1285, 341, 1285, 413, '#900000', 1.5);
path('M1285 413.500H1357.500V417M1317.500 505V611M1222.500 303V320', '#f00');

// leaders with their tags
[
  'M841 322.500H851', 'M858 325.500H872', 'M858 330.500H872', 'M902 343L904 348.500H922.500', 'M1002 339L1006 350.500H1022', 'M1053 345L1061 353.500H1102',
  'M1062 406L1056 401.500H1043', 'M1175 342L1184 353.500H1207', 'M1223 312.500H1249', 'M1261 336L1249 318.500H1223', 'M1277 338L1284 331.500H1307',
  'M1281 341.500H1307', 'M1322 346L1328 339.500H1360', 'M1304 355L1309 360.500H1332', 'M1284 368.500H1311', 'M1143 403L1155 398.500H1171',
  'M1143 410L1155 406.500H1170', 'M1141 421L1152 416.500H1167', 'M1143 438L1155 434.500H1170', 'M1193 426.500H1223', 'M1355 427.500H1375',
  'M1383 433L1387 435.500H1409', 'M1137 477L1149 473.500H1165', 'M1226 473L1234 482.500H1257', 'M1226 504L1234 513.500H1276',
  'M1325 498.500H1349', 'M1317 513.500H1341', 'M903 480.500H920', 'M1158 331.500H1180L1174 341', 'M1155 337.500H1180'
].forEach(d => path(d, GREEN));
[[840, 321, 8], [858, 324, 11], [858, 329, 11], [905, 347, 8], [1006, 349, 10], [1062, 352, 17], [1042, 400, 9], [1190, 352, 14], [1223, 310, 13], [1223, 316, 13],
  [1284, 329, 10], [1288, 340, 11], [1334, 338, 16], [1316, 361, 12], [1291, 367, 11], [1156, 397, 12], [1156, 405, 12], [1153, 415, 10], [1156, 433, 10],
  [1193, 425, 12], [1359, 426, 10], [1390, 437, 13], [1150, 472, 10], [1236, 481, 14], [1234, 512, 18], [1332, 496.5, 12], [1324, 511.5, 12],
  [905, 478, 7], [1159, 330, 11], [1155, 336, 11], [877, 338, 8], [1437, 427, 10], [1474, 427, 11]].forEach(([x, y, w]) => mark(x, y, w));
[[853, 319], [866, 319], [896, 337], [1002, 337], [1145, 403], [1145, 411], [1143, 421], [1145, 438], [905, 453], [905, 489], [1152, 493], [1325, 493], [1356, 418], [1351, 424], [1455, 424], [1499, 424], [1317, 612], [1175, 336], [1256, 337], [1275, 337], [1222, 302], [1201, 313], [1219, 425]].forEach(([x, y]) => {
  fill(x - 3, y - 1.5, x + 4, y + 2, GREEN); mark(x - 2, y, 4);
});
line(875.5, 320, 875.5, 334, GREEN);

// cyan equipment tags
[[1041, 201], [1070, 201], [1157, 201], [1222, 201], [1396, 202], [1466, 202], [1501, 201], [1014, 512], [909, 512], [1257, 512], [1535, 512]].forEach(([x, y]) => { rect(x - 2.5, y - 1.5, x + 3.5, y + 1.5, '#00b8ff'); line(x + .5, y - 1, x + .5, y + 1, '#00b8ff'); });
[[862, 372], [1656, 287], [1656, 460]].forEach(([x, y]) => { rect(x - 1.5, y - 3, x + 1.5, y + 3, '#00b8d8'); line(x - 1, y, x + 1, y, '#00b8d8'); });

// revision marks
out.push('<g shape-rendering="auto" stroke-linejoin="round" stroke-linecap="round">');
path('M895 353.500L899 360L896 370L894 377L886 379.500L871 381.500L855 380.500L843 377V367L846 364H868.500L872 366.500L883 367.500', '#ff2010', 3);
path('M1029 493H1035L1043 502L1038.500 508L1027 531H1018L1005 528.500L996.500 521L995.500 505L998 497.500H1026', '#ff2010', 3);
out.push('</g>');

// title block
rect(1504.5, 661.5, 1691.5, 705.5, W);
[1524, 1560.5, 1578.5, 1597.5, 1617.5, 1634.5].forEach((x, i) => line(x, 661, x, 705, i ? W : G, i ? 1 : 2));
line(1504, 676.5, 1691, 676.5, W); line(1504, 691, 1617, 691, G, 2);
[669.5, 683.5, 698.5].forEach(y => line(1560, y, 1691, y, '#c0c0c0'));
line(1617, 691.5, 1691, 691.5, '#c0c0c0');
line(1561, 662, 1578, 669, W);
[[1512, 669, 5], [1512, 684, 5], [1511, 698, 6], [1534, 666, 7], [1532, 672, 8], [1525, 684, 12], [1526, 698, 11]].forEach(([x, y, w]) => mark(x, y, w));
[665.5, 673.5, 680, 687.5, 695, 702.5].forEach((y, i) => {
  if (i) mark(1566, y, 6);
  mark(1586, y, 5); mark(1622, y, 2); mark(1629, y, 2);
  if (i !== 2 && i !== 3) mark(1660, y, 5);
});
mark(1604, 665.5, 7); mark(1636, 680, 7, Y); mark(1668, 680, 8, CY); mark(1648, 687.5, 21, Y); mark(1679, 687.5, 5, '#f00');

// origin marker
const oct = (x, y) => path('M' + [0, 1, 2, 3, 4, 5, 6, 7, 8].map(k => {
  const a = Math.PI / 4.5 * k;
  return (x + 11.5 * Math.sin(a)).toFixed(1) + ' ' + (y - 11.5 * Math.cos(a)).toFixed(1);
}).join('L') + 'Z', '#008000');
oct(691.5, 596.5); oct(691.5, 614); oct(730, 652); oct(747.5, 652);
line(703, 596.5, 730, 596.5, '#008000');
path('M730 596.500H747.500V640', '#d03030');
path('M720 603L740 624M740 603L720 624', '#f00', 2);
const label = (x, y, t, c = W, s = 17) => out.push(`<text x="${x}" y="${y}" text-anchor="middle" fill="${c}" stroke="none" font-size="${s}">${t}</text>`);
label(691.5, 603, 'B'); label(691.5, 620, 'A'); label(738.5, 641, '3000'); label(730, 658, '1'); label(747.5, 658, '2');
out.push('<text transform="translate(715 605) rotate(-90)" text-anchor="middle" fill="#fff" stroke="none" font-size="17">3000</text>');

// UCS icon
line(653, 822, 653, 808, GREEN, 4);
out.push('<path d="M648 809L653 796L658 809Z" fill="#0f0" stroke="none"/><path d="M671 821L683 826L671 831Z" fill="#f00" stroke="none"/>');
line(657, 826, 672, 826, '#f00', 4);
out.push('<circle cx="653" cy="826" r="5" fill="#0000c0" stroke="none"/>');
label(653, 795, 'Y', GREEN, 15); label(689, 832, 'X', '#f00', 15);

document.getElementById('cad').innerHTML = `<g shape-rendering="crispEdges">${out.join('')}</g>`;
```
